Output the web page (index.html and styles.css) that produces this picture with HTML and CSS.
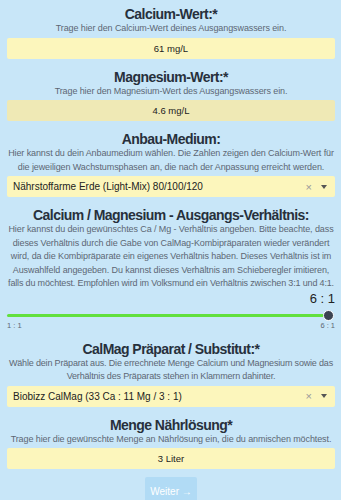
FILE: index.html
```html
<!DOCTYPE html>
<html lang="de">
<head>
<meta charset="utf-8">
<title>CalMag Rechner</title>
<link rel="stylesheet" href="styles.css">
</head>
<body>
<main class="form">
  <section class="field first">
    <h2 class="label">Calcium-Wert:*</h2>
    <p class="hint">Trage hier den Calcium-Wert deines Ausgangswassers ein.</p>
    <div class="input">61 mg/L</div>
  </section>
  <section class="field">
    <h2 class="label">Magnesium-Wert:*</h2>
    <p class="hint">Trage hier den Magnesium-Wert des Ausgangswassers ein.</p>
    <div class="input focused">4.6 mg/L</div>
  </section>
  <section class="field">
    <h2 class="label">Anbau-Medium:</h2>
    <p class="hint">Hier kannst du dein Anbaumedium wählen. Die Zahlen zeigen den Calcium-Wert für die jeweiligen Wachstumsphasen an, die nach der Anpassung erreicht werden.</p>
    <div class="select"><span class="select-value">Nährstoffarme Erde (Light-Mix) 80/100/120</span><span class="clear">×</span><span class="caret"></span></div>
  </section>
  <section class="field">
    <h2 class="label">Calcium / Magnesium - Ausgangs-Verhältnis:</h2>
    <p class="hint">Hier kannst du dein gewünschtes Ca / Mg - Verhältnis angeben. Bitte beachte, dass dieses Verhältnis durch die Gabe von CalMag-Kombipräparaten wieder verändert wird, da die Kombipräparate ein eigenes Verhältnis haben. Dieses Verhältnis ist im Auswahlfeld angegeben. Du kannst dieses Verhältnis am Schieberegler imitieren, <span class="nowrap">falls du möchtest. Empfohlen wird im Volksmund ein Verhältnis zwischen 3:1 und 4:1.</span></p>
    <div class="ratio-value">6 : 1</div>
    <div class="slider">
      <div class="track"><span class="thumb"></span></div>
      <div class="ticks"><span>1 : 1</span><span>6 : 1</span></div>
    </div>
  </section>
  <section class="field">
    <h2 class="label">CalMag Präparat / Substitut:*</h2>
    <p class="hint tight">Wähle dein Präparat aus. Die errechnete Menge Calcium und Magnesium sowie das Verhältnis des Präparats stehen in Klammern dahinter.</p>
    <div class="select"><span class="select-value">Biobizz CalMag (33 Ca : 11 Mg / 3 : 1)</span><span class="clear">×</span><span class="caret"></span></div>
  </section>
  <section class="field">
    <h2 class="label">Menge Nährlösung*</h2>
    <p class="hint">Trage hier die gewünschte Menge an Nährlösung ein, die du anmischen möchtest.</p>
    <div class="input">3 Liter</div>
  </section>
  <div class="actions"><button class="next" type="button">Weiter →</button></div>
</main>
</body>
</html>
```
FILE: styles.css
```css
* { box-sizing: border-box; }
html, body { margin: 0; padding: 0; }
body {
  background: #c8e6f8;
  font-family: "Liberation Sans", Arial, sans-serif;
  color: #27303c;
  height: 500px;
  overflow: hidden;
}
.form {
  padding: 6px 6px 0 7px;
}
.field { margin-top: 10px; }
.field.first { margin-top: 0; }
.label {
  margin: 0;
  font-size: 14px;
  letter-spacing: -0.55px;
  line-height: 16px;
  font-weight: bold;
  text-align: center;
  color: #27303c;
}
.hint {
  margin: 0;
  font-size: 9px;
  letter-spacing: -0.1px;
  line-height: 13.5px;
  text-align: center;
  color: #5d6774;
}
.hint.tight { letter-spacing: -0.17px; }
.nowrap {
  white-space: nowrap;
  letter-spacing: -0.16px;
}
.input {
  margin-top: 2px;
  height: 21px;
  line-height: 21px;
  background: #fcf6bc;
  border-radius: 2px;
  text-align: center;
  font-size: 9.5px;
  color: #222;
}
.input.focused { background: #efe9b5; }
.select {
  margin-top: 2px;
  height: 21px;
  background: #fcf6bc;
  border-radius: 2px;
  display: flex;
  align-items: center;
  padding: 0 8px 0 6px;
  font-size: 10px;
  color: #222;
}
.select-value { flex: 1; }
.clear {
  color: #9a9a9a;
  font-size: 11px;
  margin-right: 9px;
}
.caret {
  width: 0; height: 0;
  border-left: 3px solid transparent;
  border-right: 3px solid transparent;
  border-top: 4px solid #555;
}
.ratio-value {
  text-align: right;
  font-size: 13px;
  line-height: 16px;
  margin-top: 0;
  color: #222;
}
.slider { margin-top: 7px; }
.track {
  position: relative;
  height: 3px;
  background: #62e03e;
  border-radius: 2px;
  margin-right: 6px;
}
.thumb {
  position: absolute;
  right: -5px;
  top: -4px;
  width: 11px;
  height: 11px;
  border-radius: 50%;
  background: #3c4350;
  border: 1.5px solid #fff;
}
.ticks {
  display: flex;
  justify-content: space-between;
  font-size: 7.5px;
  line-height: 10px;
  margin-top: 4px;
  color: #5d6774;
}
.actions {
  display: flex;
  justify-content: center;
  margin-top: 8px;
}
.next {
  background: #b1dbf5;
  border: none;
  border-radius: 2px;
  color: #fff;
  font-family: "Liberation Sans", Arial, sans-serif;
  font-size: 10px;
  width: 52px;
  height: 28px;
  padding: 0;
}
```
